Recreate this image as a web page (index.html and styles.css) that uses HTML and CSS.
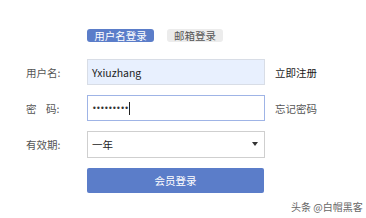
FILE: index.html
```html
<!DOCTYPE html>
<html>
<head>
<meta charset="utf-8">
<link rel="stylesheet" href="styles.css">
</head>
<body>
<div class="page">
  <div class="tabs">
    <span class="tab active">用户名登录</span>
    <span class="tab">邮箱登录</span>
  </div>
  <div class="form">
    <div class="row">
      <label class="label">用户名:</label>
      <div class="field autofill">Yxiuzhang</div>
      <a class="link strong">立即注册</a>
    </div>
    <div class="row">
      <label class="label">密&nbsp;&nbsp;&nbsp;&nbsp;码:</label>
      <div class="field focus"><span class="dots">•••••••••</span><span class="caret"></span></div>
      <a class="link">忘记密码</a>
    </div>
    <div class="row">
      <label class="label">有效期:</label>
      <div class="field select"><span>一年</span><span class="arrow"></span></div>
    </div>
    <div class="row">
      <span class="label"></span>
      <button class="submit">会员登录</button>
    </div>
  </div>
  <div class="watermark">头条 @白帽黑客</div>
</div>
</body>
</html>
```
FILE: styles.css
```css
* { box-sizing: border-box; }
html, body { margin: 0; padding: 0; background: #fff; }
body {
  width: 366px; height: 218px; overflow: hidden;
  font-family: "Noto Sans CJK SC", "Noto Sans", sans-serif;
  font-size: 11px; color: #444;
}
.page { position: relative; width: 366px; height: 218px; padding-top: 29px; }
.tabs { display: flex; gap: 13px; padding-left: 87px; height: 13px; }
.tab {
  display: flex; align-items: center; justify-content: center;
  height: 13px; padding: 0; border-radius: 3px;
  background: #ececec; color: #555; font-size: 10.5px; line-height: 13px;
}
.tab.active { background: #5b7dc9; color: #fff; width: 67px; }
.tab:not(.active) { width: 56px; }
.form { display: flex; flex-direction: column; gap: 10px; margin-top: 17px; }
.row { display: flex; align-items: center; height: 26px; }
.label { width: 87px; padding-left: 26px; color: #555; font-size: 10.5px; }
.field {
  width: 178px; height: 26px; border: 1px solid #cfcfcf;
  display: flex; align-items: center; padding-left: 4px;
  font-size: 10.5px; color: #222; background: #fff;
}
.field.autofill { background: #e8f0fe; border-color: #d8dde6; }
.field.focus { border-color: #9fb4e6; }
.dots { font-family: "DejaVu Sans", sans-serif; font-size: 8px; letter-spacing: -0.7px; color: #333; }
.caret { width: 1px; height: 13px; background: #222; margin-left: 1px; }
.field.select { justify-content: space-between; padding-right: 6px; height: 27px; }
.arrow {
  width: 0; height: 0;
  border-left: 3.5px solid transparent; border-right: 3.5px solid transparent;
  border-top: 4px solid #333;
}
.link { margin-left: 10px; font-size: 10.5px; color: #555; white-space: nowrap; }
.link.strong { color: #1a1a1a; }
.submit {
  width: 177px; height: 25px; border: 0; border-radius: 2px;
  background: #5b7dc9; color: #fff; font-family: inherit; font-size: 10.5px; padding: 0;
}
.watermark {
  position: absolute; left: 291px; top: 199px; white-space: nowrap;
  font-size: 10px; color: #666;
}
```
